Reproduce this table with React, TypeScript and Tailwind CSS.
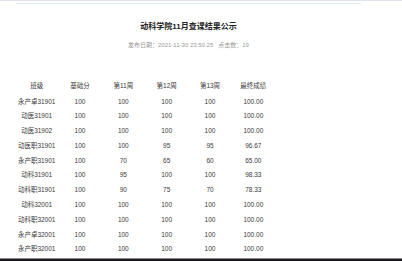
const rows: [string, string, string, string, string, string][] = [
  ["永产卓31901", "100", "100", "100", "100", "100.00"],
  ["动医31901", "100", "100", "100", "100", "100.00"],
  ["动医31902", "100", "100", "100", "100", "100.00"],
  ["动医职31901", "100", "100", "95", "95", "96.67"],
  ["永产职31901", "100", "70", "65", "60", "65.00"],
  ["动科31901", "100", "95", "100", "100", "98.33"],
  ["动科职31901", "100", "90", "75", "70", "78.33"],
  ["动科32001", "100", "100", "100", "100", "100.00"],
  ["动科职32001", "100", "100", "100", "100", "100.00"],
  ["永产卓32001", "100", "100", "100", "100", "100.00"],
  ["永产职32001", "100", "100", "100", "100", "100.00"],
];

const head = ["班级", "基础分", "第11周", "第12周", "第13周", "最终成绩"];

export default function App() {
  return (
    <div
      className="relative flex h-[261px] w-[402px] flex-col overflow-hidden bg-white text-[#3a3a3a]"
      style={{ fontFamily: '"Liberation Sans", "Noto Sans CJK SC", sans-serif' }}
    >
      <div className="h-px w-full bg-[#dfe3f1]" />
      <div className="ml-[16px] mt-[2px] h-px w-[345px] bg-[#dff1f4]" />

      <div className="flex w-[377px] flex-col items-center">
        <h1 className="mt-[18px] text-[8px] font-bold leading-[10px] text-[#222]">动科学院11月查课结果公示</h1>
        <p className="mt-[9px] text-[6px] leading-[8px] text-[#999]">
          发布日期：2021-11-30 23:50:25&nbsp;&nbsp;&nbsp;点击数：19
        </p>
      </div>

      <div className="ml-[15px] mt-[33px] w-[260px] text-center text-[6.5px] leading-[8px]">
        <div className="grid h-[15.5px] grid-cols-6 items-start">
          {head.map((h) => (
            <div key={h}>{h}</div>
          ))}
        </div>
        {rows.map((r) => (
          <div key={r[0]} className="grid h-[14.8px] grid-cols-6 items-start">
            {r.map((c, i) => (
              <div key={i}>{c}</div>
            ))}
          </div>
        ))}
      </div>

      <div className="absolute bottom-0 left-0 w-full">
        <div className="h-px w-full bg-[#8a8a8a]" />
        <div className="h-[2px] w-full bg-[#1d1820]" />
      </div>
    </div>
  );
}
